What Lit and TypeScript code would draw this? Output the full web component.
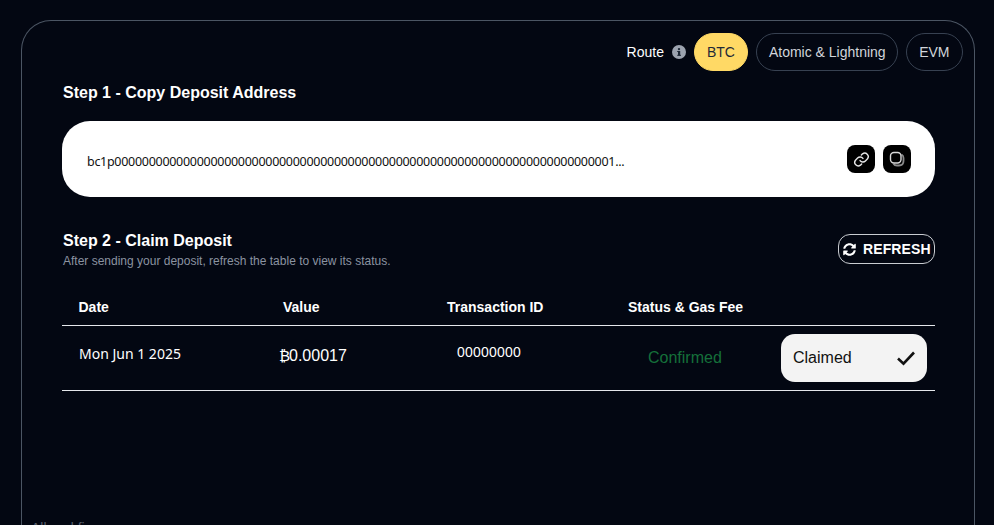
import { LitElement, html, css } from "lit";
import { customElement } from "lit/decorators.js";

const ADDRESS = "bc1p" + "0".repeat(72) + "1...";

@customElement("app-root")
export class AppRoot extends LitElement {
  static styles = css`
    :host {
      display: block;
      width: 994px;
      height: 525px;
      overflow: hidden;
      background: #030712;
      font-family: "Liberation Sans", Arial, sans-serif;
      color: #fff;
    }
    .page {
      box-sizing: border-box;
      height: 525px;
      padding: 20px 19px 0 21px;
    }
    .card {
      box-sizing: border-box;
      height: 540px;
      border: 1px solid #4b5563;
      border-bottom: 0;
      border-radius: 30px 30px 0 0;
      padding: 12px 11px 0 40px;
    }
    .routes {
      display: flex;
      justify-content: flex-end;
      align-items: center;
      height: 38px;
      font-size: 14px;
    }
    .route-label { margin-right: 8px; }
    .info { width: 14px; height: 14px; margin-right: 8px; display: block; }
    .pill {
      box-sizing: border-box;
      height: 38px;
      padding: 0 12px;
      display: flex;
      align-items: center;
      border: 1px solid #374151;
      border-radius: 19px;
      color: #d1d5db;
      margin-left: 8px;
    }
    .pill.atomic { padding: 0 11px 0 12px; }
    .pill.evm { padding: 0 12.5px; }
    .pill.active {
      background: #ffd965;
      border-color: #ffd965;
      color: #1f2937;
      margin-left: 0;
    }
    .content { padding-right: 28px; }
    h2 {
      margin: 0;
      font-size: 16px;
      line-height: 20px;
      font-weight: 700;
    }
    .step1 { margin: 12px 0 0 1px; }
    .address {
      box-sizing: border-box;
      height: 76px;
      margin-top: 18px;
      background: #fff;
      border-radius: 28px;
      padding: 0 24px 0 25px;
      display: flex;
      align-items: center;
      justify-content: space-between;
      color: #111;
    }
    .address-text {
      font-family: "Noto Sans", sans-serif;
      font-size: 12.5px;
      letter-spacing: -0.29px;
      padding-top: 4px;
    }
    .icons { display: flex; gap: 8px; }
    .icon-btn {
      width: 28px;
      height: 28px;
      border-radius: 8px;
      background: #000;
      display: flex;
      align-items: center;
      justify-content: center;
    }
    .icon-btn svg { display: block; }
    .step2 {
      display: flex;
      justify-content: space-between;
      align-items: flex-start;
      margin-top: 34px;
    }
    .step2 h2 { margin-left: 1px; }
    .hint {
      font-size: 12px;
      line-height: 14px;
      color: #8b93a1;
      margin: 3px 0 0 1px;
    }
    .refresh {
      box-sizing: border-box;
      height: 30px;
      width: 97px;
      margin-top: 3px;
      border: 1px solid #c9ccd1;
      border-radius: 12px;
      display: flex;
      align-items: center;
      gap: 7px;
      padding-left: 4px;
      font-size: 14px;
      font-weight: 700;
      letter-spacing: 0.1px;
    }
    .grid {
      display: grid;
      grid-template-columns: 204px 164px 181px 152px 1fr;
    }
    .head {
      margin-top: 21px;
      height: 36px;
      align-items: center;
      font-size: 14px;
      font-weight: 700;
      border-bottom: 1px solid #e5e7eb;
    }
    .head div:nth-child(1) { padding-left: 16.5px; }
    .head div:nth-child(2) { padding-left: 17px; }
    .head div:nth-child(3) { padding-left: 17px; }
    .head div:nth-child(4) { padding-left: 17px; }
    .row {
      height: 64px;
      align-items: center;
      border-bottom: 1px solid #e5e7eb;
    }
    .date {
      font-family: "Noto Sans", sans-serif;
      font-size: 14px;
      padding: 0 0 9px 17px;
    }
    .value { font-size: 16px; padding: 0 0 4px 13px; }
    .bitcoin {
      display: inline-block;
      width: 10px;
      font-size: 15px;
    }
    .txid { font-size: 14px; letter-spacing: 0.2px; padding: 0 0 13px 27px; }
    .status { font-size: 16px; color: #15703a; padding-left: 37px; }
    .claim {
      box-sizing: border-box;
      width: 146px;
      height: 48px;
      justify-self: end;
      margin-right: 8px;
      background: #f3f3f3;
      border-radius: 14px;
      color: #111;
      font-size: 16px;
      display: flex;
      align-items: center;
      justify-content: space-between;
      padding: 0 11px 0 12px;
    }
    .footer {
      margin: 129px 0 0 -31px;
      font-size: 14px;
      line-height: 16px;
      color: #565d6b;
    }
  `;

  render() {
    return html`
      <div class="page">
        <section class="card">
          <div class="routes">
            <span class="route-label">Route</span>
            <svg class="info" viewBox="0 0 14 14">
              <circle cx="7" cy="7" r="7" fill="#9ca3af"></circle>
              <rect x="6" y="6" width="2.2" height="4.6" fill="#1f2937"></rect>
              <rect x="5.2" y="6" width="1.6" height="1" fill="#1f2937"></rect>
              <rect x="5.2" y="9.8" width="3.8" height="1" fill="#1f2937"></rect>
              <circle cx="7" cy="4.1" r="1.2" fill="#1f2937"></circle>
            </svg>
            <div class="pill active">BTC</div>
            <div class="pill atomic">Atomic &amp; Lightning</div>
            <div class="pill evm">EVM</div>
          </div>
          <div class="content">
            <h2 class="step1">Step 1 - Copy Deposit Address</h2>
            <div class="address">
              <span class="address-text">${ADDRESS}</span>
              <div class="icons">
                <div class="icon-btn">
                  <svg width="17" height="17" viewBox="0 0 24 24" fill="none" stroke="#e8e8e8" stroke-width="2" stroke-linecap="round" stroke-linejoin="round">
                    <path d="M10 13.500a5 5 0 0 0 7.500.5l3-3a5 5 0 0 0-7-7l-1.700 1.700"></path>
                    <path d="M14 10.500a5 5 0 0 0-7.500-.5l-3 3a5 5 0 0 0 7 7l1.700-1.700"></path>
                  </svg>
                </div>
                <div class="icon-btn">
                  <svg width="16" height="16" viewBox="0 0 16 16" fill="none" stroke-width="1.400">
                    <path d="M12.500 3.500c1.300.7 2 1.900 2 3.500v3c0 2.700-1.800 4.500-4.500 4.500H8c-1.500 0-2.800-.6-3.500-1.800" stroke="#8a8a8a" stroke-width="1.800"></path>
                    <rect x="1.500" y="1.500" width="10.500" height="10.500" rx="3.500" stroke="#d8d8d8"></rect>
                  </svg>
                </div>
              </div>
            </div>
            <div class="step2">
              <div>
                <h2>Step 2 - Claim Deposit</h2>
                <p class="hint">After sending your deposit, refresh the table to view its status.</p>
              </div>
              <div class="refresh">
                <svg width="13" height="13" viewBox="0 0 512 512" fill="#fff">
                  <path d="M370.700 133.300C339.500 104 298.900 88 255.800 88c-77.500.1-144.300 53.200-162.800 126.900-1.300 5.400-6.100 9.100-11.600 9.100H24.100c-7.500 0-13.200-6.800-11.800-14.200C33.900 94.900 134.800 8 256 8c66.400 0 126.800 26.100 171.300 68.700L463 41c15.100-15.100 41-4.400 41 17v134c0 13.300-10.700 24-24 24H346c-21.400 0-32.100-25.900-17-41l41.700-41.700zM32 296h134c21.400 0 32.100 25.900 17 41l-41.800 41.800c31.300 29.300 71.800 45.300 114.900 45.200 77.400-.1 144.300-53.100 162.800-126.800 1.300-5.400 6.100-9.100 11.600-9.100h57.300c7.500 0 13.200 6.800 11.800 14.200C478.100 417.100 377.200 504 256 504c-66.400 0-126.800-26.100-171.300-68.700L49 471c-15.100 15.100-41 4.400-41-17V320c0-13.300 10.700-24 24-24z"></path>
                </svg>
                <span>REFRESH</span>
              </div>
            </div>
            <div class="grid head">
              <div>Date</div>
              <div>Value</div>
              <div>Transaction ID</div>
              <div>Status &amp; Gas Fee</div>
              <div></div>
            </div>
            <div class="grid row">
              <div class="date">Mon Jun 1 2025</div>
              <div class="value"><span class="bitcoin">₿</span>0.00017</div>
              <div class="txid">00000000</div>
              <div class="status">Confirmed</div>
              <div class="claim">
                <span>Claimed</span>
                <svg width="20" height="16" viewBox="0 0 20 16" fill="none" stroke="#111" stroke-width="2.600">
                  <path d="M2 8.500l5.500 5.200L18 2.500"></path>
                </svg>
              </div>
            </div>
            <div class="footer">Alkend fi</div>
          </div>
        </section>
      </div>
    `;
  }
}
